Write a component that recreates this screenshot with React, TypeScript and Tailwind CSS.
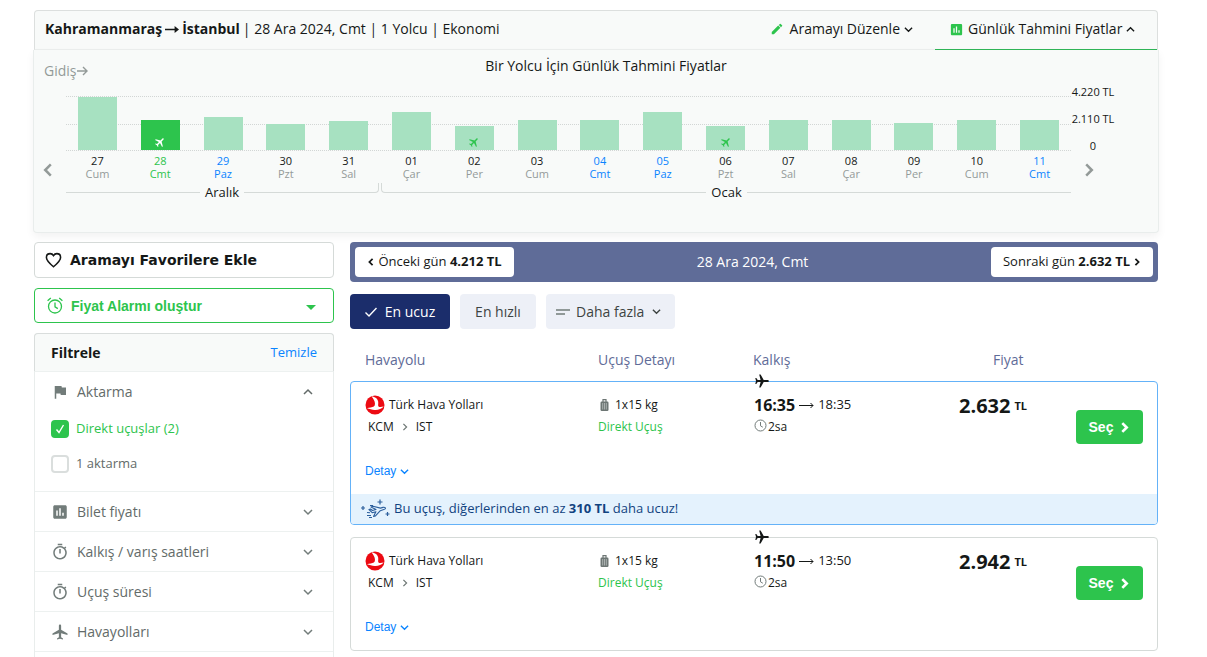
import { useState } from "react";
import type { ReactNode } from "react";
import {
  MdAssessment,
  MdEdit,
  MdFlag,
  MdLocalAirport,
  MdOutlineTimer,
} from "react-icons/md";

type Day = {
  day: string;
  name: string;
  height: number;
  tone?: "selected" | "weekend";
  direct?: boolean;
};

const days: Day[] = [
  { day: "27", name: "Cum", height: 53 },
  { day: "28", name: "Cmt", height: 30, tone: "selected", direct: true },
  { day: "29", name: "Paz", height: 33, tone: "weekend" },
  { day: "30", name: "Pzt", height: 26 },
  { day: "31", name: "Sal", height: 29 },
  { day: "01", name: "Çar", height: 38 },
  { day: "02", name: "Per", height: 24, direct: true },
  { day: "03", name: "Cum", height: 30 },
  { day: "04", name: "Cmt", height: 30, tone: "weekend" },
  { day: "05", name: "Paz", height: 38, tone: "weekend" },
  { day: "06", name: "Pzt", height: 24, direct: true },
  { day: "07", name: "Sal", height: 30 },
  { day: "08", name: "Çar", height: 30 },
  { day: "09", name: "Per", height: 27 },
  { day: "10", name: "Cum", height: 30 },
  { day: "11", name: "Cmt", height: 30, tone: "weekend" },
];

const flights = [
  { from: "16:35", to: "18:35", price: "2.632", saving: "310 TL" },
  { from: "11:50", to: "13:50", price: "2.942", saving: "" },
];

type ChevronProps = {
  dir: "left" | "right" | "up" | "down";
  size?: number;
  stroke?: number;
};

function Chevron({ dir, size = 10, stroke = 1.5 }: ChevronProps) {
  const paths = {
    left: "M7 1 3 5l4 4",
    right: "M3 1l4 4-4 4",
    up: "M1 7l4-4 4 4",
    down: "M1 3l4 4 4-4",
  };
  return (
    <svg width={size} height={size} viewBox="0 0 10 10" fill="none" stroke="currentColor" strokeWidth={stroke} className="shrink-0">
      <path d={paths[dir]} />
    </svg>
  );
}

function SearchBar() {
  return (
    <div className="flex h-10 items-stretch rounded-t border border-[#dcdfde] border-b-[#ebeeed] bg-[#f8faf9] text-sm">
      <div className="flex flex-1 items-center gap-[3px] pb-0.5 pl-2.5">
        <strong>Kahramanmaraş</strong>
        <svg width="14" height="9" viewBox="0 0 14 9" className="shrink-0">
          <path d="M0 3.7h9.6V1L14 4.5 9.6 8V5.3H0z" fill="currentColor" />
        </svg>
        <strong>İstanbul</strong>
        <span>| 28 Ara 2024, Cmt | 1 Yolcu | Ekonomi</span>
      </div>
      <button className="flex items-center pb-0.5 pr-[22px]">
        <MdEdit size={14} className="mr-1.5 text-[#2dc44d]" />
        Aramayı Düzenle
        <span className="ml-1">
          <Chevron dir="down" size={9} />
        </span>
      </button>
      <button className="-mb-px flex w-[222px] items-center border-b border-[#2fb457] pb-0.5 pl-3.5">
        <MdAssessment size={15} className="mr-1 text-[#2dc44d]" />
        Günlük Tahmini Fiyatlar
        <span className="ml-1">
          <Chevron dir="up" size={9} />
        </span>
      </button>
    </div>
  );
}

function DayBar({ item }: { item: Day }) {
  const selected = item.tone === "selected";
  return (
    <div
      className={`flex w-[39px] items-end justify-center pb-0.5 ${selected ? "bg-[#2dc44d] text-white" : "bg-[#a7e1c1] text-[#2dc44d]"}`}
      style={{ height: item.height }}
    >
      {item.direct && <MdLocalAirport size={12} className="rotate-45" />}
    </div>
  );
}

function DayLabel({ item }: { item: Day }) {
  const day = item.tone === "selected" ? "text-[#2dc44d]" : item.tone === "weekend" ? "text-[#0a84ff]" : "text-[#151817]";
  const name = item.tone ? "" : "text-[#949b99]";
  return (
    <div className={`text-center text-[11px] leading-[13px] ${day}`}>
      <div>{item.day}</div>
      <div className={name}>{item.name}</div>
    </div>
  );
}

function PriceChart() {
  return (
    <section className="-mx-px rounded-b border-x border-b border-[#e9edec] bg-[#f8faf9] pb-[31px] pt-1.5 shadow-[0_4px_8px_rgba(0,0,0,0.05)]">
      <div className="flex h-[26px] items-start pl-2.5 text-sm leading-5">
        <div className="flex w-[45px] items-center gap-px pt-[5px] text-[#939a98]">
          Gidiş
          <svg width="11" height="10" viewBox="0 0 11 10" fill="none" stroke="currentColor" strokeWidth="1.4" className="shrink-0">
            <path d="M0 5h10M6 1l4 4-4 4" />
          </svg>
        </div>
        <h2 className="flex-1 pr-[35px] text-center">Bir Yolcu İçin Günlük Tahmini Fiyatlar</h2>
      </div>

      <div className="flex items-start">
        <button aria-label="Önceki günler" className="mt-20 flex h-4 w-8 items-center justify-center pr-1 text-[#939a98]">
          <Chevron dir="left" size={14} stroke={1.8} />
        </button>

        <div className="flex-1 pt-3.5">
          <div className="relative h-[55px] border-y border-dotted border-[#d2d6d5]">
            <div className="absolute inset-x-0 top-[27px] border-t border-dotted border-[#d2d6d5]" />
            <div className="relative grid h-full grid-cols-16 items-end justify-items-center">
              {days.map((item) => (
                <DayBar key={item.day} item={item} />
              ))}
            </div>
          </div>
          <div className="mt-[3px] grid grid-cols-16">
            {days.map((item) => (
              <DayLabel key={item.day} item={item} />
            ))}
          </div>
          <div className="mt-[3px] grid grid-cols-16 text-[13px] leading-[18px]">
            <div className="col-span-5 mr-px flex">
              <div className="h-2.5 flex-1 border-b border-[#d5dad8]" />
              <span className="px-[5px]">Aralık</span>
              <div className="h-2.5 flex-1 rounded-br border-b border-r border-[#d5dad8]" />
            </div>
            <div className="col-span-11 ml-px flex">
              <div className="h-2.5 flex-1 rounded-bl border-b border-l border-[#d5dad8]" />
              <span className="px-[5px]">Ocak</span>
              <div className="h-2.5 flex-1 border-b border-[#d5dad8]" />
            </div>
          </div>
        </div>

        <div className="w-[87px]">
          <div className="flex w-11 flex-col items-center gap-[7px] whitespace-nowrap text-[11px] leading-5">
            <span>4.220 TL</span>
            <span>2.110 TL</span>
            <span>0</span>
          </div>
          <button aria-label="Sonraki günler" className="mt-1.5 flex h-4 w-9 items-center justify-center text-[#939a98]">
            <Chevron dir="right" size={14} stroke={1.8} />
          </button>
        </div>
      </div>
    </section>
  );
}

function CheckRow({ label, checked = false }: { label: string; checked?: boolean }) {
  const [on, setOn] = useState(checked);
  return (
    <label className={`flex h-[35px] items-center gap-[7px] text-[13px] ${on ? "text-[#2dc44d]" : "text-[#636b69]"}`}>
      <span className="relative flex size-[18px]">
        <input
          type="checkbox"
          checked={on}
          onChange={() => setOn(!on)}
          className="size-[18px] appearance-none rounded border-2 border-[#dadedd] bg-white checked:border-[#2dc44d] checked:bg-[#2dc44d]"
        />
        {on && (
          <svg viewBox="0 0 18 18" fill="none" stroke="white" strokeWidth="1.4" className="pointer-events-none absolute inset-0">
            <path d="M5.5 9.5 8 12.500l4.500-7.500" />
          </svg>
        )}
      </span>
      {label}
    </label>
  );
}

function FilterRow({ icon, label }: { icon: ReactNode; label: string }) {
  return (
    <button className="flex h-10 w-full items-center border-t border-[#edf1f0] pl-4 pr-5 text-sm text-[#636b69]">
      <span className="flex w-[26px] text-[#727c7a]">{icon}</span>
      {label}
      <span className="ml-auto text-[#727c7a]">
        <Chevron dir="down" />
      </span>
    </button>
  );
}

function Sidebar() {
  return (
    <aside className="flex w-[300px] shrink-0 flex-col gap-2.5">
      <button className="flex h-9 items-center gap-2 rounded border border-[#d5dad8] pl-2.5 font-['DejaVu_Sans',sans-serif] text-sm font-bold">
        <svg width="17" height="16" viewBox="0 0 24 22" fill="none" stroke="currentColor" strokeWidth="2.2">
          <path d="M12 20.500C5 14.500 2 11.500 2 7.300 2 4.200 4.300 2 7.200 2 9.200 2 11 3 12 4.700 13 3 14.800 2 16.800 2 19.700 2 22 4.200 22 7.300c0 4.200-3 7.200-10 13.200z" />
        </svg>
        Aramayı Favorilere Ekle
      </button>

      <button className="flex h-[35px] items-center rounded border border-[#2dc44d] pl-3 pr-[17px] font-['Liberation_Sans',Arial,sans-serif] text-sm font-bold text-[#2dc44d]">
        <svg width="16" height="17" viewBox="0 0 16 17" fill="none" stroke="currentColor" strokeWidth="1.3" className="mr-2">
          <circle cx="8" cy="9.500" r="6.500" />
          <path d="M8 5.500v4.300l2.800 1.800M.6 3.800 3.800 1M15.400 3.800 12.200 1" />
        </svg>
        Fiyat Alarmı oluştur
        <svg width="10" height="5" viewBox="0 0 10 5" className="ml-auto mt-1">
          <path d="M0 0h10L5 5z" fill="currentColor" />
        </svg>
      </button>

      <section className="rounded-t border border-[#e9edec] pb-6">
        <div className="-mx-px -mt-px flex h-[38px] items-center justify-between rounded-t border border-b-0 border-[#d9dddc] bg-[#f8faf9] px-4">
          <h2 className="text-sm font-bold">Filtrele</h2>
          <a href="#temizle" className="text-[13px] text-[#0a84ff]">
            Temizle
          </a>
        </div>
        <div className="border-t border-[#edf1f0] pb-2.5">
          <button className="flex h-[39px] w-full items-center pl-4 pr-5 text-sm text-[#636b69]">
            <span className="flex w-[26px] text-[#727c7a]">
              <MdFlag size={18} />
            </span>
            Aktarma
            <span className="ml-auto">
              <Chevron dir="up" />
            </span>
          </button>
          <div className="px-4">
            <CheckRow label="Direkt uçuşlar (2)" checked />
            <CheckRow label="1 aktarma" />
          </div>
        </div>
        <FilterRow icon={<MdAssessment size={18} />} label="Bilet fiyatı" />
        <FilterRow icon={<MdOutlineTimer size={18} />} label="Kalkış / varış saatleri" />
        <FilterRow icon={<MdOutlineTimer size={18} />} label="Uçuş süresi" />
        <FilterRow icon={<MdLocalAirport size={18} />} label="Havayolları" />
        <div className="border-t border-[#edf1f0]" />
      </section>
    </aside>
  );
}

function AirlineLogo() {
  return (
    <svg width="20" height="20" viewBox="0 0 20 20" className="shrink-0">
      <circle cx="10" cy="10" r="9.500" fill="#ec0a12" />
      <path
        d="M6.500 1.500c3.500 0 6.300 2.300 6.700 5.300.3 2.100-.5 3.600.3 4.600.8.9 2.800.7 5.200.2-2 2.400-5.500 3.600-9 3.400-2.800-.1-5.200-1.200-7.700-1.700 2.500-1 5.200-.6 6.800-1.700 1.700-1.200 1.400-4.300.1-6.600C8.200 3.600 7.500 2.500 6.500 1.500z"
        fill="white"
      />
    </svg>
  );
}

function PlaneIcon() {
  return (
    <svg width="14" height="14" viewBox="0 0 14 14" fill="currentColor">
      <path d="M14 7c0 .7-.9 1.100-2 1.100H8.700L5.600 13.600H4.200L5.600 8.100H2.700L1.300 10H.3L1 7 .3 4h1l1.400 1.900h2.900L4.200.4h1.400l3.100 5.500H12c1.100 0 2 .4 2 1.100z" />
    </svg>
  );
}

function BagIcon() {
  return (
    <svg width="9" height="13" viewBox="0 0 9 13">
      <path d="M3 3V.7h3V3" fill="none" stroke="#6d7674" strokeWidth="1.2" />
      <rect x=".5" y="2.500" width="8" height="9.500" rx="1.200" fill="#6d7674" />
      <path d="M2.700 4v6.500M4.500 4v6.500M6.300 4v6.500" stroke="#c4cac8" strokeWidth=".7" />
    </svg>
  );
}

function SparklePlane() {
  return (
    <svg width="29" height="20" viewBox="0 0 29 20" fill="none" stroke="#2b5e9c" strokeWidth="1.1" strokeLinejoin="round">
      <path d="M8 10.500 9.500 10l2 1.500 3.500-1-5-2.500 2-.8 7.500 1.900 2.500-.7c1.400-.3 2.500.1 2.500.8 0 .6-.8 1.100-1.700 1.400l-3.500 1.100-4.800 5.200-2 .5 2.400-4.700-3.700 1z" />
      <path d="M6 13.500l3 .3M6 16.500h4M8 18.500h3M9 6.500h3" />
      <path d="M19 .500v5M16.500 3h5M2 7v4M0 9h4M26.500 13v4M24.500 15h4" strokeWidth="1.2" />
    </svg>
  );
}

function FlightCard({ flight }: { flight: (typeof flights)[number] }) {
  const border = flight.saving ? "border-[#64b2f8]" : "border-[#d5dad8]";
  return (
    <article className={`relative rounded border ${border} text-xs`}>
      <div className="grid h-28 grid-cols-[233fr_155fr_206fr_184fr] px-3.5 pt-3">
        <div className="flex flex-col items-start">
          <div className="flex h-[22px] items-center gap-1">
            <AirlineLogo />
            Türk Hava Yolları
          </div>
          <div className="flex h-[22px] items-center gap-[7px] pl-[3px]">
            KCM
            <span className="text-[#6d7674]">
              <Chevron dir="right" size={8} />
            </span>
            IST
          </div>
          <button className="mt-[22px] flex h-[22px] items-center gap-1 font-['Liberation_Sans',Arial,sans-serif] text-[#0a84ff]">
            Detay
            <Chevron dir="down" size={9} />
          </button>
        </div>

        <div>
          <div className="flex h-[22px] items-center gap-1.5 pl-0.5">
            <BagIcon />
            1x15 kg
          </div>
          <div className="flex h-[22px] items-center text-[#2dc44d]">Direkt Uçuş</div>
        </div>

        <div className="relative pl-px">
          <span className="absolute -top-5 left-0.5">
            <PlaneIcon />
          </span>
          <div className="flex h-[22px] items-center gap-1">
            <strong className="text-base leading-5">{flight.from}</strong>
            <svg width="15" height="7" viewBox="0 0 15 7" fill="none" stroke="currentColor">
              <path d="M0 3.500h14M11.500 1 14 3.500 11.500 6" />
            </svg>
            <span className="text-[13px]">{flight.to}</span>
          </div>
          <div className="flex h-[22px] items-center gap-px">
            <svg width="13" height="13" viewBox="0 0 13 13" fill="none" stroke="#727c7a" className="mb-1">
              <circle cx="6.500" cy="6.500" r="5.500" />
              <path d="M6.500 3v3.800l2.300 1.400" />
            </svg>
            2sa
          </div>
        </div>

        <div className="flex items-start justify-between">
          <div className="flex h-6 items-center gap-1 font-bold">
            <span className="text-xl leading-6">{flight.price}</span>
            <span className="text-[11px]">TL</span>
          </div>
          <button className="mt-4 flex h-[34px] w-[67px] items-center justify-center gap-1.5 rounded bg-[#2dc44d] font-['Liberation_Sans',Arial,sans-serif] text-sm font-bold text-white">
            Seç
            <Chevron dir="right" size={11} stroke={2.4} />
          </button>
        </div>
      </div>
      {flight.saving && (
        <p className="flex h-[30px] items-center gap-1 rounded-b-[3px] bg-[#e4f2fd] pl-2.5 text-[13px] text-[#114380]">
          <SparklePlane />
          <span>
            Bu uçuş, diğerlerinden en az <strong>{flight.saving}</strong> daha ucuz!
          </span>
        </p>
      )}
    </article>
  );
}

function Results() {
  return (
    <main className="flex-1">
      <div className="flex h-10 items-center justify-between rounded bg-[#5f6c98] px-[5px] text-[13px]">
        <button className="flex h-[30px] w-[159px] items-center justify-center gap-[3px] rounded bg-white">
          <Chevron dir="left" size={8} stroke={2.2} />
          <span>
            Önceki gün <strong>4.212 TL</strong>
          </span>
        </button>
        <span className="text-sm text-white">28 Ara 2024, Cmt</span>
        <button className="flex h-[30px] w-[162px] items-center justify-center gap-[3px] rounded bg-white">
          <span>
            Sonraki gün <strong>2.632 TL</strong>
          </span>
          <Chevron dir="right" size={8} stroke={2.2} />
        </button>
      </div>

      <div className="mt-3 flex gap-2.5 text-sm text-[#3d4442]">
        <button className="flex h-[35px] w-[100px] items-center justify-center gap-2 rounded bg-[#1b2d6b] text-white">
          <svg width="12" height="10" viewBox="0 0 12 10" fill="none" stroke="currentColor" strokeWidth="1.4">
            <path d="M.5 5.500 4 9l7.500-8" />
          </svg>
          En ucuz
        </button>
        <button className="h-[35px] w-[76px] rounded bg-[#edf0f7]">En hızlı</button>
        <button className="flex h-[35px] w-[129px] items-center rounded bg-[#edf0f7] pl-2.5">
          <svg width="14" height="6" viewBox="0 0 14 6" fill="none" stroke="#727c7a" strokeWidth="1.5" className="mr-1.5">
            <path d="M0 1h14M0 5h9" />
          </svg>
          Daha fazla
          <span className="ml-2">
            <Chevron dir="down" size={9} />
          </span>
        </button>
      </div>

      <div className="mt-[19px] grid h-[33px] grid-cols-[233fr_155fr_206fr_184fr] px-[15px] pt-0.5 text-sm leading-5 text-[#5f6c98]">
        <span>Havayolu</span>
        <span>Uçuş Detayı</span>
        <span>Kalkış</span>
        <span className="pl-[34px]">Fiyat</span>
      </div>

      <div className="flex flex-col gap-3">
        {flights.map((flight) => (
          <FlightCard key={flight.from} flight={flight} />
        ))}
      </div>
    </main>
  );
}

export default function App() {
  return (
    <div className="bg-white pl-[34px] pr-[49px] pt-2.5 font-['Open_Sans','Noto_Sans',sans-serif] text-[#151817]">
      <SearchBar />
      <PriceChart />
      <div className="mt-[9px] flex items-start gap-4">
        <Sidebar />
        <Results />
      </div>
    </div>
  );
}
